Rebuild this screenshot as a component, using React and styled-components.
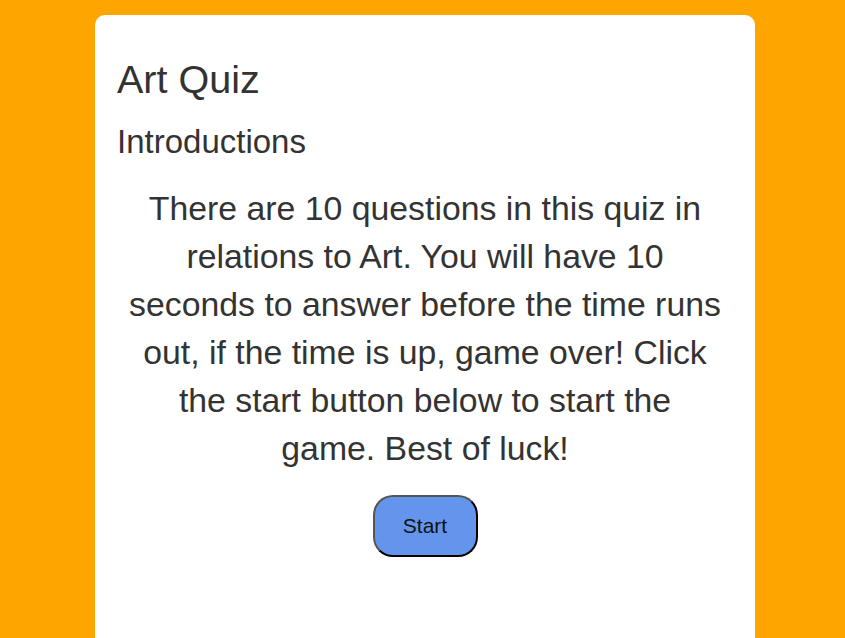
import React from 'react'
import styled, { createGlobalStyle } from 'styled-components'

const GlobalStyle = createGlobalStyle`
    html, body {
        margin: 0;
        padding: 0;
        background: #ffa500;
        font-family: "Liberation Sans", Arial, sans-serif;
        color: #333;
    }
`

const Page = styled.div`
    display: flex;
    justify-content: center;
    padding: 15px 0 0 5px;
`

const Card = styled.div`
    width: 660px;
    min-height: 700px;
    box-sizing: border-box;
    padding: 0 22px;
    background: #fff;
    border-radius: 10px;
    display: flex;
    flex-direction: column;
`

const Title = styled.h1`
    font-size: 39.5px;
    font-weight: normal;
    line-height: normal;
    margin: 42px 0 21px;
`

const Subtitle = styled.h2`
    font-size: 33px;
    font-weight: normal;
    line-height: normal;
    margin: 0 0 23px;
`

const Intro = styled.p`
    align-self: center;
    width: 592.5px;
    font-size: 33.8px;
    line-height: 48px;
    text-align: center;
    margin: 0 0 23px;
`

const Botao = styled.button`
    align-self: center;
    width: 105px;
    height: 62px;
    background: #6495ed;
    color: #111;
    font-family: "Liberation Sans", Arial, sans-serif;
    font-size: 21px;
    border: 2px solid;
    border-color: #555 #000 #000 #555;
    border-radius: 20px;
    cursor: pointer;
`

export default function App() {
    return (
        <>
            <GlobalStyle />
            <Page>
                <Card>
                    <Title>Art Quiz</Title>
                    <Subtitle>Introductions</Subtitle>
                    <Intro>
                        There are 10 questions in this quiz in relations to Art. You will have 10
                        seconds to answer before the time runs out, if the time is up, game over!
                        Click the start button below to start the game. Best of luck!
                    </Intro>
                    <Botao>Start</Botao>
                </Card>
            </Page>
        </>
    )
}
